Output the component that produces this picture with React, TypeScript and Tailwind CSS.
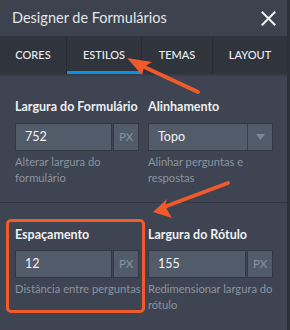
import React from "react";

const font = { fontFamily: 'Lato, "Noto Sans", sans-serif' };

function NumInput({ value, w }: { value: string; w: string }) {
  return (
    <div className="flex gap-px h-[28px]">
      <div className={`${w} h-full bg-[#525b6a] border border-[#333943] flex items-center pl-[9px] text-[12.5px] text-[#f2f3f5]`}>
        {value}
      </div>
      <div className="w-[26px] h-full bg-[#525b6a] border border-[#333943] flex items-center justify-center text-[11.5px] text-[#8a929f]">
        PX
      </div>
    </div>
  );
}

function Helper({ children }: { children: React.ReactNode }) {
  return <div className="mt-[3px] text-[11.2px] leading-[16px] text-[#8c94a0]">{children}</div>;
}

function Label({ children }: { children: React.ReactNode }) {
  return <div className="text-[12.5px] leading-[16px] font-bold text-[#eef0f2] whitespace-nowrap">{children}</div>;
}

export default function App() {
  return (
    <div className="relative w-[290px] h-[330px] overflow-hidden bg-[#3e4451]" style={font}>
      <div className="w-[287px] h-full flex flex-col">
        {/* header */}
        <div className="h-[36px] bg-[#3c424e] flex items-center justify-between pl-[12px] pr-[11px]">
          <span className="text-[14.5px] text-[#e4e7eb]">Designer de Formulários</span>
          <svg width="15" height="15" viewBox="0 0 15 15">
            <path d="M1.5 1.5L13.5 13.5M13.5 1.5L1.5 13.5" stroke="#f3f4f6" strokeWidth="2" strokeLinecap="square" />
          </svg>
        </div>
        {/* tabs */}
        <div className="h-[38px] bg-[#2f343d] flex text-[11px] text-[#eceef1] font-medium">
          <div className="w-[67px] flex items-center justify-center border-r border-[#272b32]">CORES</div>
          <div className="w-[75px] flex items-center justify-center border-r border-[#272b32] relative">
            ESTILOS
            <div className="absolute left-0 right-0 bottom-0 h-[3px] bg-[#0d8fe6]" />
          </div>
          <div className="w-[71px] flex items-center justify-center border-r border-[#272b32]">TEMAS</div>
          <div className="flex-1 flex items-center justify-center">LAYOUT</div>
        </div>
        <div className="h-[2px] bg-[#373c47]" />
        {/* section 1 */}
        <div className="pt-[15px] pb-[10px] pl-[6px] grid grid-cols-[139px_125px] gap-x-[3px] border-b border-[#323742]">
          <div className="border-[3px] border-transparent pl-[6px] pr-0 pt-[5px] pb-[3px]">
            <Label>Largura do Formulário</Label>
            <div className="mt-2">
              <NumInput value="752" w="w-[97px]" />
            </div>
            <Helper>Alterar largura do formulário</Helper>
          </div>
          <div className="pt-[8px]">
            <Label>Alinhamento</Label>
            <div className="mt-2 h-[28px] bg-[#525b6a] border border-[#333943] flex">
              <div className="flex-1 flex items-center pl-[9px] text-[12.5px] text-[#f2f3f5]">Topo</div>
              <div className="w-[25px] border-l border-[#3a404b] flex items-center justify-center">
                <svg width="9" height="6" viewBox="0 0 9 6">
                  <path d="M0 0H9L4.5 6Z" fill="#7e8694" />
                </svg>
              </div>
            </div>
            <Helper>Alinhar perguntas e respostas</Helper>
          </div>
        </div>
        {/* section 2 */}
        <div className="pt-[16px] pl-[6px] grid grid-cols-[139px_125px] gap-x-[3px]">
          <div className="border-[3px] border-[#f15a2b] rounded-[5px] pl-[6px] pr-0 pt-[5px] pb-[3px]">
            <Label>Espaçamento</Label>
            <div className="mt-[7px]">
              <NumInput value="12" w="w-[97px]" />
            </div>
            <Helper>
              <span className="whitespace-nowrap">Distância entre perguntas</span>
            </Helper>
          </div>
          <div className="pt-[8px]">
            <Label>Largura do Rótulo</Label>
            <div className="mt-[7px]">
              <NumInput value="155" w="w-[98px]" />
            </div>
            <Helper>
              <span className="whitespace-nowrap">Redimensionar largura do</span>
              <br />
              rótulo
            </Helper>
          </div>
        </div>
      </div>
      <div className="absolute top-0 right-0 w-[3px] h-full bg-[#2c3038]" />
      {/* arrows */}
      <svg className="absolute inset-0 pointer-events-none" width="290" height="330" viewBox="0 0 290 330">
        <line x1="198" y1="92" x2="140" y2="65" stroke="#f15a2b" strokeWidth="4" strokeLinecap="round" />
        <polygon points="127,58 152,62 144,67 142,75" fill="#f15a2b" />
        <line x1="228" y1="183" x2="164" y2="207" stroke="#f15a2b" strokeWidth="4" strokeLinecap="round" />
        <polygon points="153,212 167,199 165,206 172,218" fill="#f15a2b" />
      </svg>
    </div>
  );
}
